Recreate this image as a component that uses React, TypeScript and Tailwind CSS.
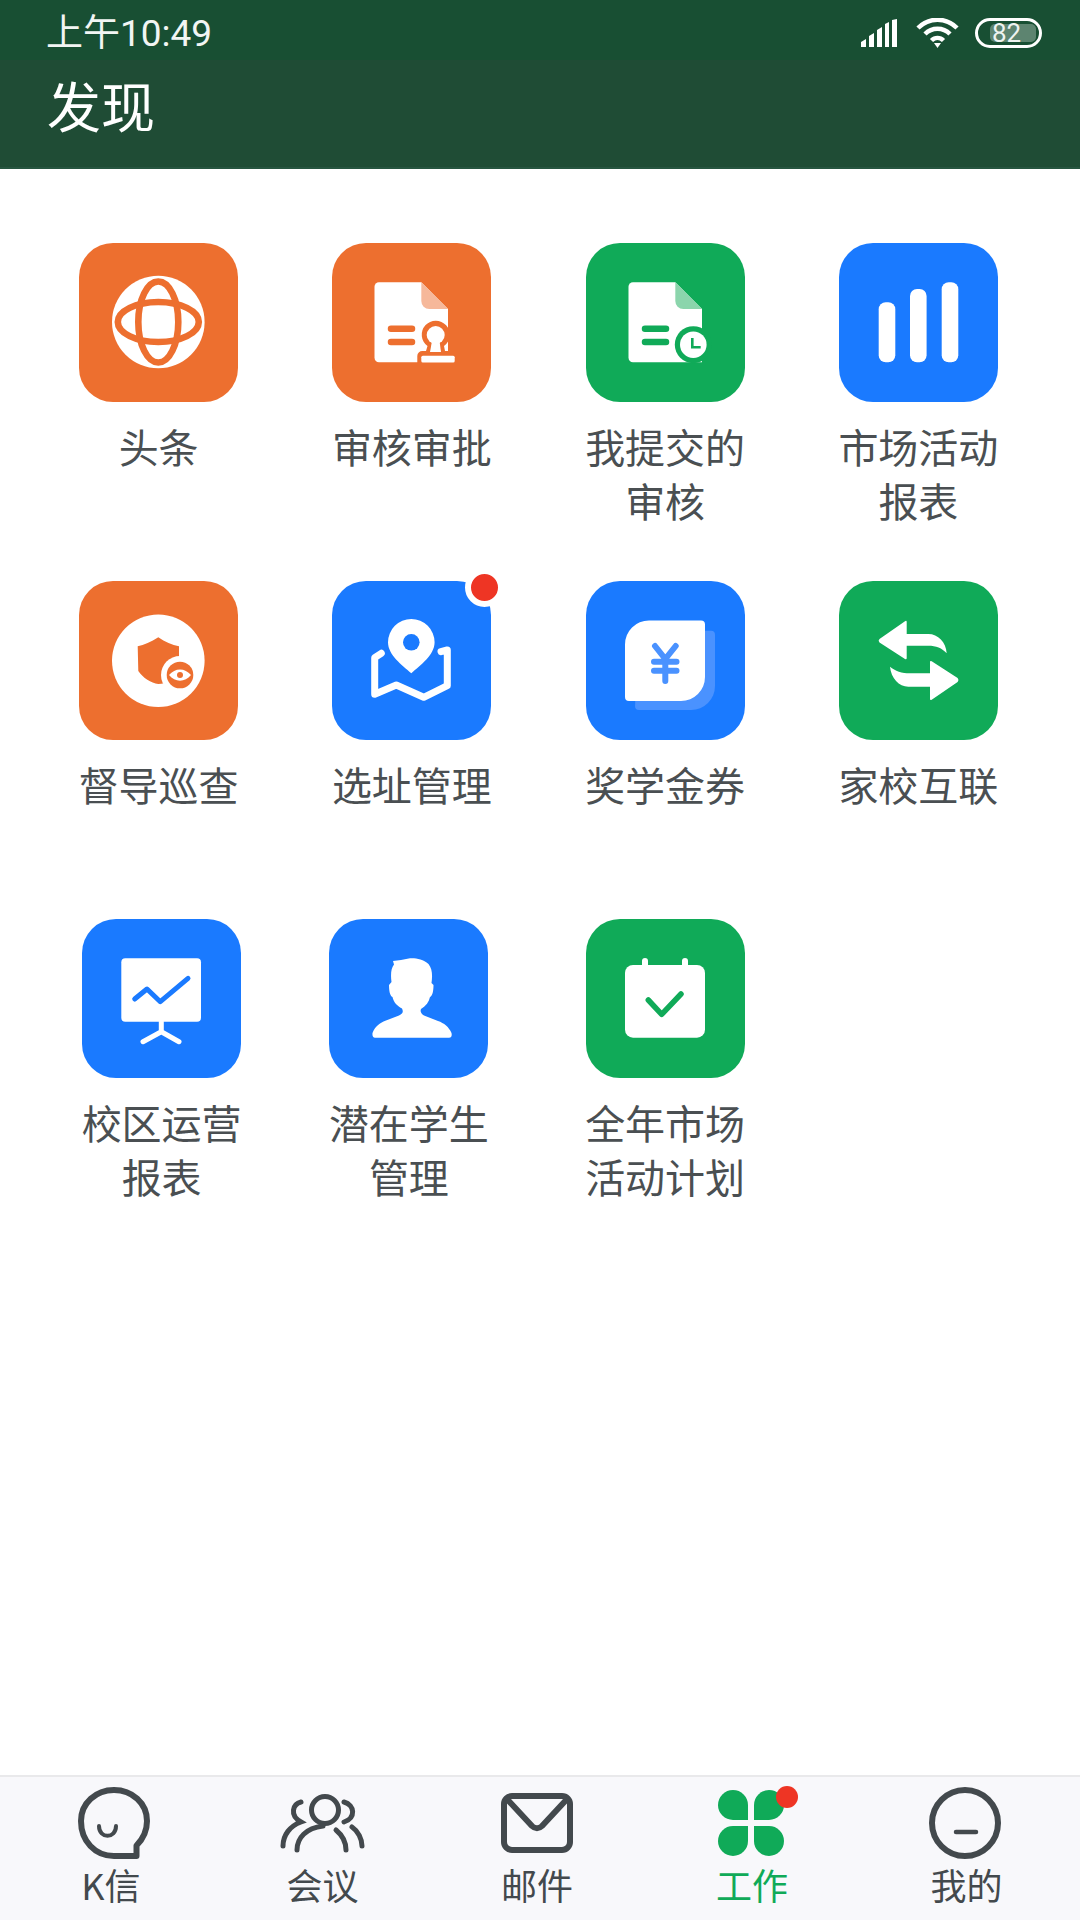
import type { ReactNode } from 'react';

const ORANGE = 'bg-[#ed6f2f]';
const GREEN = 'bg-[#10aa58]';
const BLUE = 'bg-[#1a7aff]';

function DocBase({ color, fold, children }: { color: string; fold: string; children: ReactNode }) {
  return (
    <svg viewBox="0 0 159 159" className="h-full w-full">
      <path d="M47 39.3H89.3L116 66V119.3H47a4.5 4.5 0 0 1-4.5-4.5V43.8a4.5 4.5 0 0 1 4.5-4.5Z" fill="#fff" />
      <path d="M89.3 39.3L116 66H97.3a8 8 0 0 1-8-8Z" fill={fold} />
      <path d="M59 85.7H80M59 99H80" stroke={color} strokeWidth="6.5" strokeLinecap="round" />
      {children}
    </svg>
  );
}

const GlobeIcon = (
  <svg viewBox="0 0 159 159" className="h-full w-full">
    <circle cx="79.3" cy="79" r="46.3" fill="#fff" />
    <ellipse cx="79.3" cy="79" rx="40.5" ry="20" fill="none" stroke="#ed6f2f" strokeWidth="6.6" />
    <ellipse cx="79.3" cy="79" rx="20" ry="40.5" fill="none" stroke="#ed6f2f" strokeWidth="6.6" />
  </svg>
);

const StampIcon = (
  <DocBase color="#ed6f2f" fold="#f6b89a">
    <path d="M85.3 120V113a5 5 0 0 1 5-5H94L95.5 103A14 14 0 1 1 112 103L113 108H117V120Z" fill="#ed6f2f" />
    <circle cx="103.7" cy="92" r="9" fill="#fff" />
    <path d="M100 98H107.5L109 109H98Z" fill="#fff" />
    <rect x="89.3" y="112.7" width="33.4" height="6.8" rx="1.5" fill="#fff" />
  </DocBase>
);

const ClockDocIcon = (
  <DocBase color="#10aa58" fold="#8bd5ac">
    <circle cx="107.3" cy="101.7" r="18.5" fill="#10aa58" />
    <circle cx="107.3" cy="101.7" r="13.3" fill="#fff" />
    <path d="M106.3 95V104.3H114.7" fill="none" stroke="#10aa58" strokeWidth="2.6" />
  </DocBase>
);

const BarsIcon = (
  <svg viewBox="0 0 159 159" className="h-full w-full" fill="#fff">
    <rect x="39.7" y="59.3" width="16.6" height="60" rx="7" />
    <rect x="71" y="46" width="16.6" height="73.3" rx="7" />
    <rect x="102.7" y="39.3" width="16.6" height="80" rx="7" />
  </svg>
);

const ShieldIcon = (
  <svg viewBox="0 0 159 159" className="h-full w-full">
    <circle cx="79.3" cy="79.7" r="46.3" fill="#fff" />
    <path d="M79.3 56.3C72 61 65 64 58.7 65.3L59.3 90C64 97 72 102 79.3 103C88 103 96 97 100 90V65.3C93 64 86 61 79.3 56.3Z" fill="#ed6f2f" />
    <circle cx="101" cy="94" r="19" fill="#fff" />
    <circle cx="101" cy="94" r="13.3" fill="#ed6f2f" />
    <path d="M90 94C96 86.5 106 86.5 112 94C106 101.5 96 101.5 90 94Z" fill="#fff" />
    <circle cx="101" cy="94" r="3" fill="#ed6f2f" />
  </svg>
);

const MapIcon = (
  <svg viewBox="0 0 159 159" className="h-full w-full">
    <path d="M79.3 92.3C70 84 56 74 56 61.3a23.3 23.3 0 0 1 46.6 0C102.6 74 88.6 84 79.3 92.3Z" fill="#fff" />
    <circle cx="79.3" cy="61.3" r="8.3" fill="#1a7aff" />
    <path d="M49.3 72.3L42.7 76.7V113.3L64.3 104L91.7 116.3L115.3 104.7V69L109 70.7" fill="none" stroke="#fff" strokeWidth="7" strokeLinecap="round" strokeLinejoin="round" />
  </svg>
);

const VoucherIcon = (
  <svg viewBox="0 0 159 159" className="h-full w-full">
    <path d="M53 49.7H125a4 4 0 0 1 4 4V105a24 24 0 0 1-24 24H53a4 4 0 0 1-4-4Z" fill="#4a92ff" />
    <path d="M63 39.5H115a4 4 0 0 1 4 4V96a24 24 0 0 1-24 24H43a4 4 0 0 1-4-4V63.5a24 24 0 0 1 24-24Z" fill="#fff" />
    <path d="M69 65L79.3 78L89.7 65M68 80.7H90.5M68 89.7H90.5M79.3 78V100" fill="none" stroke="#4a92ff" strokeWidth="6" strokeLinecap="round" strokeLinejoin="round" />
  </svg>
);

const SwapIcon = (
  <svg viewBox="0 0 159 159" className="h-full w-full" fill="#fff">
    <path d="M40.5 58L66 40.2Q67.7 39.2 67.7 41V53H89.3C99 53 107 61 107.7 72.3C103 67 97 64.7 89.3 64.7H67.7V77Q67.7 78.8 66 78L40.5 61.5Q38.7 59.7 40.5 58Z" />
    <path d="M118.6 97L92.7 80.2Q91 79.4 91 81V92.3H71C63 92.3 56 90 51 85.7C52 97 60 105.7 69.3 105.7H91V118Q91 119.7 92.7 118.8L118.6 101Q120.4 99 118.6 97Z" />
  </svg>
);

const ChartIcon = (
  <svg viewBox="0 0 159 159" className="h-full w-full">
    <rect x="39.3" y="39.3" width="79.7" height="63.4" rx="4" fill="#fff" />
    <path d="M52.7 80L65 70L78.3 82.7L106 59.3" fill="none" stroke="#1a7aff" strokeWidth="5" strokeLinecap="round" strokeLinejoin="round" />
    <path d="M79.3 102.7V112.7M61 122.7L79.3 112.7L97 122.7" fill="none" stroke="#fff" strokeWidth="5" strokeLinecap="round" strokeLinejoin="round" />
  </svg>
);

const PersonIcon = (
  <svg viewBox="0 0 159 159" className="h-full w-full">
    <path
      d="M46 118.7H120Q123.5 118.7 122.5 114C120 108 115 104 109 102L95 96.5C92 95 91 92.5 92 90C97 87 100 83 101 78C103.5 77 104.5 72 104.5 66L102.5 64C103.5 57 103.5 50 99.5 45C94 40 87 39 81 39.3L72 41L64 42L65 45.5C62 49 61.5 56 62.5 63L60 66C60 72 61 77 63.5 78C64.5 83 68 87 73 89.5C74.5 92.5 74 95 70 96.5L57 101.5C50 104 46 108 43.5 114Q43 118.7 46 118.7Z"
      fill="#fff"
    />
  </svg>
);

const CalendarIcon = (
  <svg viewBox="0 0 159 159" className="h-full w-full">
    <rect x="39" y="46" width="80" height="72.7" rx="8" fill="#fff" />
    <path d="M59 42V48M99 42V48" stroke="#fff" strokeWidth="6" strokeLinecap="round" />
    <path d="M62.3 81L75.7 95.3L95 75" fill="none" stroke="#10aa58" strokeWidth="5.5" strokeLinecap="round" strokeLinejoin="round" />
  </svg>
);

type Item = { label: string; bg: string; icon: ReactNode; badge?: boolean; cell?: string };

const items: Item[] = [
  { label: '头条', bg: ORANGE, icon: GlobeIcon },
  { label: '审核审批', bg: ORANGE, icon: StampIcon },
  { label: '我提交的审核', bg: GREEN, icon: ClockDocIcon },
  { label: '市场活动报表', bg: BLUE, icon: BarsIcon },
  { label: '督导巡查', bg: ORANGE, icon: ShieldIcon },
  { label: '选址管理', bg: BLUE, icon: MapIcon, badge: true },
  { label: '奖学金券', bg: BLUE, icon: VoucherIcon },
  { label: '家校互联', bg: GREEN, icon: SwapIcon },
  { label: '校区运营报表', bg: BLUE, icon: ChartIcon, cell: 'ml-[6px]' },
  { label: '潜在学生管理', bg: BLUE, icon: PersonIcon, cell: 'mr-[6px]' },
  { label: '全年市场活动计划', bg: GREEN, icon: CalendarIcon },
];

function AppTile({ item }: { item: Item }) {
  return (
    <div className={`flex flex-col items-center ${item.cell ?? ''}`}>
      <div className={`relative h-[159px] w-[159px] rounded-[34px] ${item.bg}`}>
        {item.icon}
        {item.badge && (
          <span className="absolute -top-[13px] -right-[13px] h-[39px] w-[39px] rounded-full border-[6px] border-white bg-[#ee3524]" />
        )}
      </div>
      <div className="mt-[17px] w-[162px] text-center text-[40px] leading-[54px] text-[#4a4f52]">{item.label}</div>
    </div>
  );
}

function StatusBar() {
  return (
    <div className="flex h-[60px] items-center justify-between bg-[#184f33] pt-[6px] pl-[46px] pr-[38px] text-white">
      <span className="text-[37px] leading-none font-['Roboto','Noto_Sans_CJK_SC',sans-serif] text-[#f2f5f3]">上午10:49</span>
      <div className="flex items-center">
        <svg viewBox="0 0 38 28" className="h-[28px] w-[38px]" fill="#fff">
          <path d="M0 28V23L5 20V28ZM8 28V17L13 14V28ZM16 28V11L21 8V28ZM24 28V5L28 3V28ZM31 28V1L36 0V28Z" />
        </svg>
        <svg viewBox="0 0 43 30" className="ml-[17px] h-[30px] w-[43px]" fill="none" stroke="#fff" strokeWidth="4.5">
          <path d="M2 10C13 -1 30 -1 41 10" />
          <path d="M9 16C16 9 27 9 34 16" />
          <path d="M15.5 22.5C19 19 24 19 27.5 22.5" />
          <path d="M18 25L21.5 30L25 25Z" fill="#fff" stroke="none" />
        </svg>
        <div className="relative ml-[16px] flex h-[30px] w-[67px] items-center rounded-[15px] border-[3px] border-white">
          <div className="ml-[12px] flex h-[18px] w-[46px] items-center rounded-[5px] bg-white/30 pl-[2px] font-['Roboto',sans-serif] text-[26px] leading-none text-[#eef3f0]">
            82
          </div>
        </div>
      </div>
    </div>
  );
}

const GRAY = '#43494d';

const tabs: { label: string; active?: boolean; icon: ReactNode }[] = [
  {
    label: 'K信',
    icon: (
      <svg viewBox="0 0 72 72" className="ml-[5px] h-[72px] w-[72px]" fill="none" stroke={GRAY} strokeWidth="6">
        <path d="M36 69H58.5V58.5C65 52 69 44 69 34C69 16 54 3 36 3C18 3 3 16 3 34C3 54 17 69 36 69Z" strokeLinejoin="round" />
        <path d="M21 39C21 52 38 52 38 39" strokeWidth="4" strokeLinecap="round" />
      </svg>
    ),
  },
  {
    label: '会议',
    icon: (
      <svg viewBox="0 0 85 60" className="h-[60px] w-[85px]" fill="none" stroke={GRAY} strokeWidth="5" strokeLinecap="round">
        <circle cx="45" cy="17" r="13.5" />
        <path d="M17 57C17 45 26 35 43 33" />
        <path d="M56 37C62 42 66 49 66 57" />
        <path d="M21 9C13 11 9 22 21 29C10 33 3 42 3 53" />
        <path d="M64 9C75 12 76 25 64 29M72 34C78 38 82 46 82 53" />
      </svg>
    ),
  },
  {
    label: '邮件',
    icon: (
      <svg viewBox="0 0 72 60" className="h-[60px] w-[72px]" fill="none" stroke={GRAY} strokeWidth="6">
        <rect x="3" y="3" width="66" height="54" rx="8" />
        <path d="M5 5L31 33C34 36 38 36 41 33L67 5" strokeLinejoin="round" />
      </svg>
    ),
  },
  {
    label: '工作',
    active: true,
    icon: (
      <svg viewBox="0 0 66 66" className="mr-[2px] h-[66px] w-[66px]" fill="#10aa58">
        <path d="M30 30H15A15 15 0 1 1 30 15Z" />
        <path d="M36 30H51A15 15 0 1 0 36 15Z" />
        <path d="M30 36H15A15 15 0 1 0 30 51Z" />
        <path d="M36 36H51A15 15 0 1 1 36 51Z" />
      </svg>
    ),
  },
  {
    label: '我的',
    icon: (
      <svg viewBox="0 0 72 72" className="mr-[4px] h-[72px] w-[72px]" fill="none" stroke={GRAY}>
        <circle cx="36" cy="36" r="33" strokeWidth="6" />
        <path d="M27 45H47" strokeWidth="4.5" strokeLinecap="round" />
      </svg>
    ),
  },
];

function TabBar() {
  return (
    <div className="grid h-[145px] grid-cols-[222px_201px_228px_202px_227px] border-t-2 border-[#e9e9eb] bg-[#f8f8fb]">
      {tabs.map((t) => (
        <div key={t.label} className="relative flex flex-col items-center">
          <div className="flex h-[89px] items-center pt-[2px]">
            <div className="relative">
              {t.icon}
              {t.active && <span className="absolute -top-[4px] -right-[12px] h-[22px] w-[22px] rounded-full bg-[#ee3524]" />}
            </div>
          </div>
          <span className={`text-[36px] leading-[36px] ${t.active ? 'text-[#10aa58]' : 'text-[#43494d]'}`}>{t.label}</span>
        </div>
      ))}
    </div>
  );
}

export default function App() {
  return (
    <div className="flex h-[1920px] w-[1080px] flex-col overflow-hidden bg-white font-['Noto_Sans_CJK_SC','Roboto',sans-serif]">
      <StatusBar />
      <div className="flex h-[109px] items-center border-b-2 border-[#275540] bg-[#1f4c35] pl-[47px] pb-[18px]">
        <h1 className="text-[54px] leading-none font-normal text-white">发现</h1>
      </div>

      <main className="flex-1">
        <div className="grid grid-cols-4 auto-rows-[338px] pl-[32px] pr-[35px] pt-[74px]">
          {items.map((item) => (
            <AppTile key={item.label} item={item} />
          ))}
        </div>
      </main>

      <TabBar />
    </div>
  );
}
